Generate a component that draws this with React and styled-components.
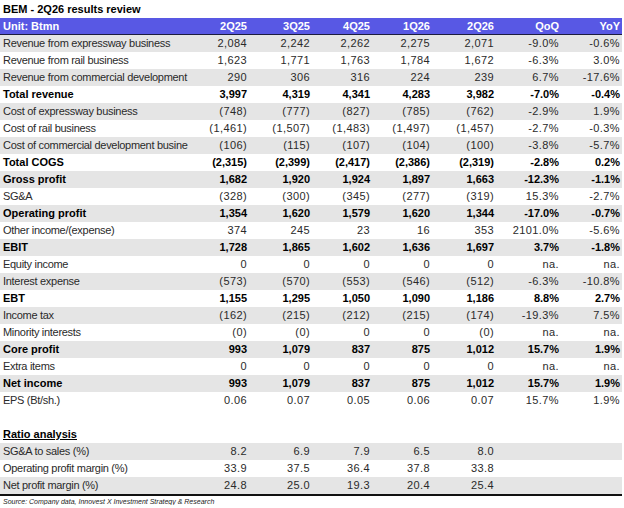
import React from "react";
import styled, { createGlobalStyle } from "styled-components";

const Global = createGlobalStyle`
  html, body { margin: 0; padding: 0; background: #fff; }
  body { font-family: "Liberation Sans", Arial, sans-serif; }
`;

const COLS = "192px 55px 63px 60px 60px 64px 65px 61px";

const Page = styled.div`
  width: 622px;
  display: flex;
  flex-direction: column;
  color: #222;
  font-size: 11px;
`;

const Title = styled.div`
  height: 18px;
  line-height: 18px;
  padding-left: 3px;
  font-weight: 700;
  font-size: 11px;
  color: #000;
`;

const Row = styled.div`
  display: grid;
  grid-template-columns: ${COLS};
  height: 17px;
  line-height: 17px;
  background: ${(p) => (p.$shade ? "#e5e5e5" : "#fff")};
  font-weight: ${(p) => (p.$bold ? 700 : 400)};
  color: ${(p) => (p.$bold ? "#000" : "#2a2a2a")};
`;

const HeaderRow = styled(Row)`
  background: #5858e4;
  color: #fff;
  font-weight: 700;
  height: 16px;
  line-height: 16px;
  border-bottom: 1px solid #1c1c40;
`;

const Label = styled.div`
  padding-left: 3px;
  white-space: nowrap;
  overflow: hidden;
  letter-spacing: ${(p) => (p.$bold ? "0" : "-0.3px")};
`;

const Num = styled.div`
  text-align: right;
  white-space: nowrap;
  letter-spacing: ${(p) => (p.$bold ? "0" : "0.4px")};
`;

const Section = styled.div`
  height: 17px;
  line-height: 17px;
  padding-left: 3px;
  font-weight: 700;
  color: #000;
  text-decoration: underline;
`;

const Spacer = styled.div`
  height: 17px;
`;

const Ratios = styled.div`
  display: flex;
  flex-direction: column;
  border-bottom: 2px solid #111;
`;

const Source = styled.div`
  padding-left: 3px;
  padding-top: 2px;
  font-size: 7px;
  font-style: italic;
  color: #222;
`;

const rows = [
  ["Revenue from expressway business", "2,084", "2,242", "2,262", "2,275", "2,071", "-9.0%", "-0.6%"],
  ["Revenue from rail business", "1,623", "1,771", "1,763", "1,784", "1,672", "-6.3%", "3.0%"],
  ["Revenue from commercial development", "290", "306", "316", "224", "239", "6.7%", "-17.6%"],
  ["Total revenue", "3,997", "4,319", "4,341", "4,283", "3,982", "-7.0%", "-0.4%", true],
  ["Cost of expressway business", "(748)", "(777)", "(827)", "(785)", "(762)", "-2.9%", "1.9%"],
  ["Cost of rail business", "(1,461)", "(1,507)", "(1,483)", "(1,497)", "(1,457)", "-2.7%", "-0.3%"],
  ["Cost of commercial development busine", "(106)", "(115)", "(107)", "(104)", "(100)", "-3.8%", "-5.7%"],
  ["Total COGS", "(2,315)", "(2,399)", "(2,417)", "(2,386)", "(2,319)", "-2.8%", "0.2%", true],
  ["Gross profit", "1,682", "1,920", "1,924", "1,897", "1,663", "-12.3%", "-1.1%", true],
  ["SG&A", "(328)", "(300)", "(345)", "(277)", "(319)", "15.3%", "-2.7%"],
  ["Operating profit", "1,354", "1,620", "1,579", "1,620", "1,344", "-17.0%", "-0.7%", true],
  ["Other income/(expense)", "374", "245", "23", "16", "353", "2101.0%", "-5.6%"],
  ["EBIT", "1,728", "1,865", "1,602", "1,636", "1,697", "3.7%", "-1.8%", true],
  ["Equity income", "0", "0", "0", "0", "0", "na.", "na."],
  ["Interest expense", "(573)", "(570)", "(553)", "(546)", "(512)", "-6.3%", "-10.8%"],
  ["EBT", "1,155", "1,295", "1,050", "1,090", "1,186", "8.8%", "2.7%", true],
  ["Income tax", "(162)", "(215)", "(212)", "(215)", "(174)", "-19.3%", "7.5%"],
  ["Minority interests", "(0)", "(0)", "0", "0", "(0)", "na.", "na."],
  ["Core profit", "993", "1,079", "837", "875", "1,012", "15.7%", "1.9%", true],
  ["Extra items", "0", "0", "0", "0", "0", "na.", "na."],
  ["Net income", "993", "1,079", "837", "875", "1,012", "15.7%", "1.9%", true],
  ["EPS (Bt/sh.)", "0.06", "0.07", "0.05", "0.06", "0.07", "15.7%", "1.9%"],
];

const ratios = [
  ["SG&A to sales (%)", "8.2", "6.9", "7.9", "6.5", "8.0", "", ""],
  ["Operating profit margin  (%)", "33.9", "37.5", "36.4", "37.8", "33.8", "", ""],
  ["Net profit margin (%)", "24.8", "25.0", "19.3", "20.4", "25.4", "", ""],
];

const heads = ["2Q25", "3Q25", "4Q25", "1Q26", "2Q26", "QoQ", "YoY"];

function DataRow({ r, shade }) {
  const [label, ...rest] = r;
  const bold = rest.length > 7 && rest[7] === true;
  const vals = rest.slice(0, 7);
  return (
    <Row $shade={shade} $bold={bold}>
      <Label $bold={bold}>{label}</Label>
      {vals.map((v, i) => (
        <Num key={i} $bold={bold}>{v}</Num>
      ))}
    </Row>
  );
}

export default function App() {
  return (
    <>
      <Global />
      <Page>
        <Title>BEM - 2Q26 results review</Title>
        <HeaderRow>
          <Label $bold>Unit: Btmn</Label>
          {heads.map((h) => (
            <Num key={h} $bold>{h}</Num>
          ))}
        </HeaderRow>
        {rows.map((r, i) => (
          <DataRow key={i} r={r} shade={i % 2 === 0} />
        ))}
        <Spacer />
        <Section>Ratio analysis</Section>
        <Ratios>
          {ratios.map((r, i) => (
            <DataRow key={i} r={r} shade={i % 2 === 0} />
          ))}
        </Ratios>
        <Source>Source: Company data, Innovest X Investment Strategy &amp; Research</Source>
      </Page>
    </>
  );
}
